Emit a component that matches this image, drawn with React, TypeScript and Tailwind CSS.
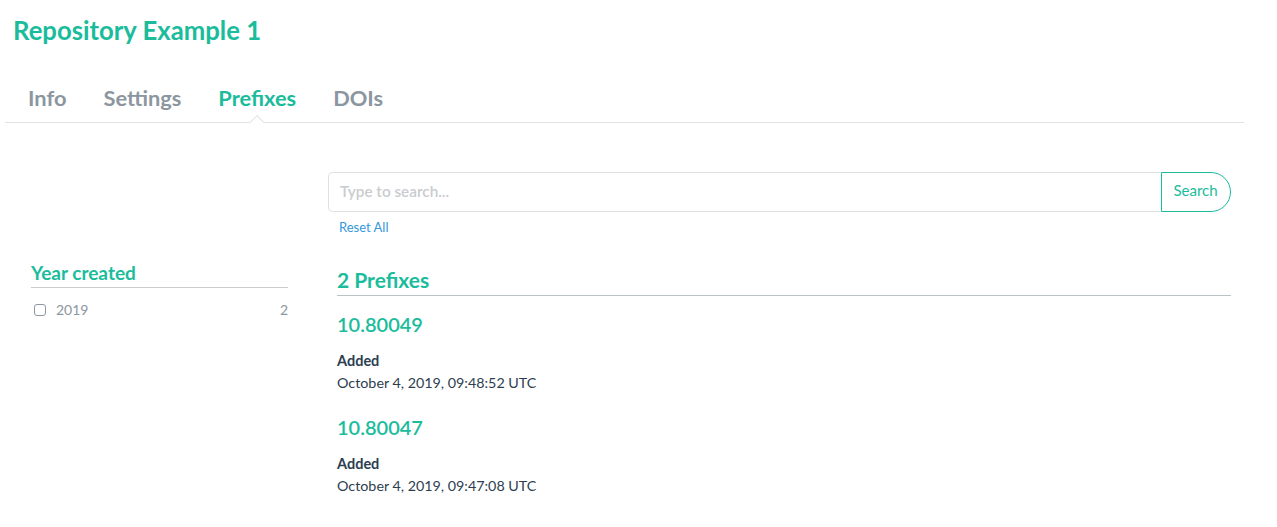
const TABS = ["Info", "Settings", "Prefixes", "DOIs"];

const PREFIXES = [
  { id: "10.80049", added: "October 4, 2019, 09:48:52 UTC" },
  { id: "10.80047", added: "October 4, 2019, 09:47:08 UTC" },
];

export default function App() {
  return (
    <div className="h-[527px] overflow-hidden bg-white font-['Lato',sans-serif] text-[#2c3e50]">
      <h1 className="pl-[13px] pt-[15px] text-[25.7px] leading-[30px] font-bold text-[#1abc9c]">
        Repository Example 1
      </h1>

      {/* tabs */}
      <div className="ml-[5px] mt-[37px] flex h-[41px] w-[1239px] gap-[37px] border-b border-[#e0e3e6] pl-[23px]">
        {TABS.map((t) => (
          <div
            key={t}
            className={`relative pt-[1px] text-[21.8px] leading-[30px] font-bold ${
              t === "Prefixes" ? "text-[#1abc9c]" : "text-[#8b96a0]"
            }`}
          >
            {t}
            {t === "Prefixes" && (
              <span className="absolute bottom-[-5px] left-1/2 h-[10px] w-[10px] -translate-x-1/2 rotate-45 border-l border-t border-[#e0e3e6] bg-white" />
            )}
          </div>
        ))}
      </div>

      <div className="mt-[49px] flex">
        {/* sidebar */}
        <aside className="ml-[31px] w-[257px] pt-[90px]">
          <h4 className="border-b border-[#c8cccf] pb-[4px] text-[19px] leading-[21px] font-bold text-[#1abc9c]">
            Year created
          </h4>
          <div className="mt-[12px] flex items-center text-[14px] leading-[20px] text-[#8b96a0]">
            <span className="ml-[3px] h-[12px] w-[12px] rounded-[3px] border border-[#8b96a0]" />
            <span className="ml-[10px]">2019</span>
            <span className="ml-auto">2</span>
          </div>
        </aside>

        {/* main column */}
        <main className="ml-[40px] w-[903px]">
          <div className="flex h-[40px]">
            <div className="flex flex-1 items-center rounded-l-[5px] border border-r-0 border-[#e0e0e0] pb-[2px] pl-[11px] text-[15.3px] font-semibold text-[#c9cccf]">
              Type to search...
            </div>
            <div className="flex w-[70px] items-center justify-center rounded-r-[20px] border border-[#1abc9c] pb-[4px] pr-[1px] text-[15px] text-[#1abc9c]">
              Search
            </div>
          </div>
          <div className="ml-[11px] mt-[7px] text-[13px] leading-[16px] text-[#3498db]">Reset All</div>

          <div className="ml-[9px] mt-[32px]">
            <h3 className="border-b border-[#b9c2c4] pb-[2px] text-[21px] leading-[26px] font-bold text-[#1abc9c]">
              2 Prefixes
            </h3>
            {PREFIXES.map((p, i) => (
              <div key={p.id} className={i === 0 ? "mt-[15px]" : "mt-[20px]"}>
                <h3 className="text-[20px] leading-[26px] font-semibold text-[#1abc9c]">{p.id}</h3>
                <div className="mt-[13px] text-[14.5px] leading-[22px] font-bold">Added</div>
                <div className="text-[14.3px] leading-[22px]">{p.added}</div>
              </div>
            ))}
          </div>
        </main>
      </div>
    </div>
  );
}
